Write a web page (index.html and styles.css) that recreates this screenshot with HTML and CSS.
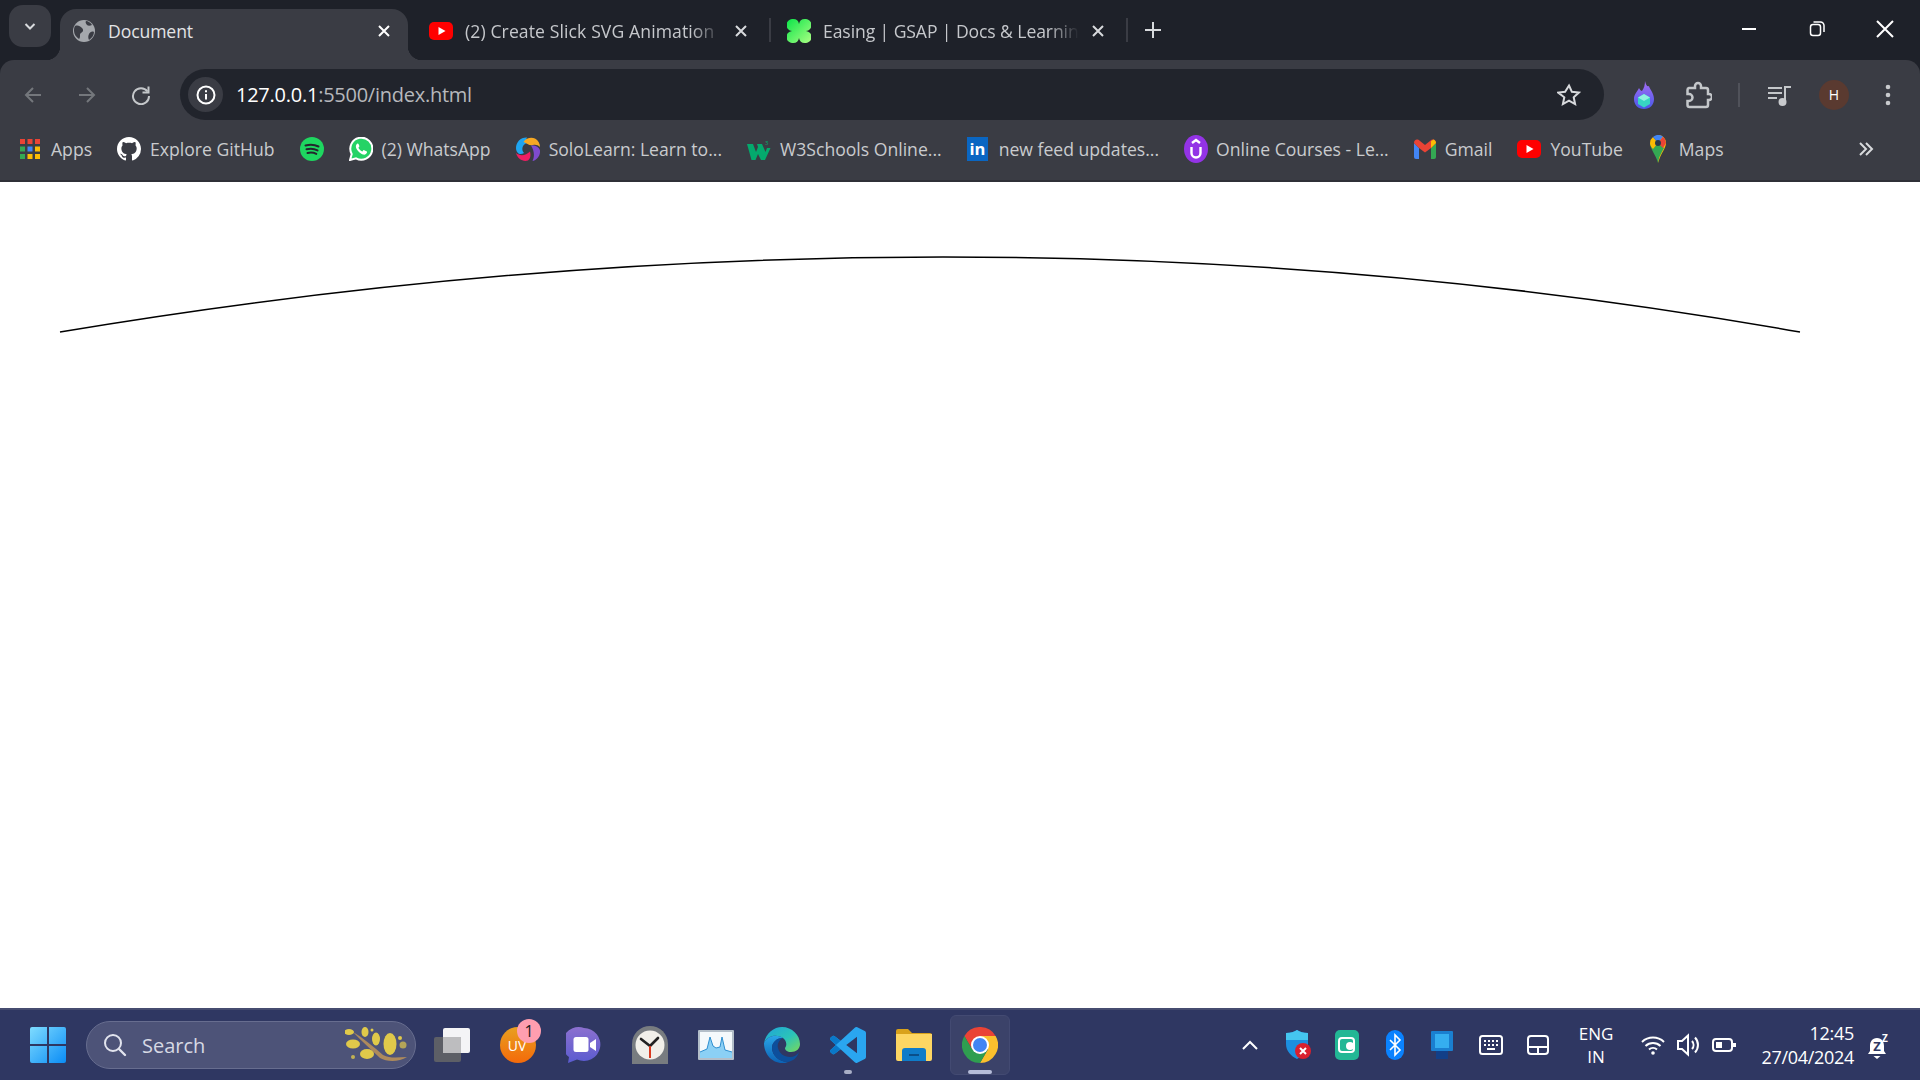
FILE: index.html
```html
<!DOCTYPE html>
<html lang="en">
<head>
<meta charset="utf-8">
<title>Document</title>
<link rel="stylesheet" href="styles.css">
</head>
<body>
<header class="chrome">
  <div class="tabstrip">
    <button class="tab-menu"><svg width="14" height="14" viewBox="0 0 14 14"><path d="M2.5 5l4.5 4.5L11.5 5" class="st2 lt"/></svg></button>
    <div class="tab tab-active">
      <svg class="fav" width="24" height="24" viewBox="0 0 24 24"><circle cx="12" cy="12" r="11" fill="#a5a8ad"/><path d="M3 7c3-1 5 0 7 2s1 4-1 5 0 4-2 6c-3-2-5-5-5-8 0-2 0-3 1-5zM14 2c2 0 5 2 6 4-2 1-4 1-5 0s-2-3-1-4zM22 13c0 3-2 6-5 8-1-2-1-4 0-6s3-3 5-2z" fill="#3a3c44"/></svg>
      <span class="tab-title tab-title-active">Document</span>
      <svg class="x" width="14" height="14" viewBox="0 0 14 14"><path d="M2 2l10 10M12 2L2 12" class="st2 wh"/></svg>
    </div>
    <div class="tab tab-yt">
      <svg class="fav" width="24" height="24" viewBox="0 0 24 24"><rect y="3" width="24" height="18" rx="5" fill="#f00"/><path d="M9.5 8l7 4-7 4z" fill="#fff"/></svg>
      <span class="tab-title tab-title-yt">(2) Create Slick SVG Animation</span>
      <svg class="x" width="14" height="14" viewBox="0 0 14 14"><path d="M2 2l10 10M12 2L2 12" class="st2 lt"/></svg>
    </div>
    <i class="tab-sep"></i>
    <div class="tab tab-gs">
      <svg class="fav" width="24" height="24" viewBox="0 0 24 24"><defs><linearGradient id="gs" x1="0" y1="0" x2="1" y2="1"><stop offset="0" stop-color="#0ae448"/><stop offset="1" stop-color="#abff84"/></linearGradient></defs><path d="M6 0a6 6 0 0 1 6 5 6 6 0 0 1 6-5 6 6 0 0 1 1 12 6 6 0 0 1-1 12 6 6 0 0 1-6-5 6 6 0 0 1-6 5 6 6 0 0 1-1-12A6 6 0 0 1 6 0z" fill="url(#gs)"/></svg>
      <span class="tab-title tab-title-gs">Easing | GSAP | Docs &amp; Learnin</span>
      <svg class="x" width="14" height="14" viewBox="0 0 14 14"><path d="M2 2l10 10M12 2L2 12" class="st2 lt"/></svg>
    </div>
    <i class="tab-sep"></i>
    <svg class="plus" width="16" height="16" viewBox="0 0 16 16"><path d="M8 0v16M0 8h16" class="st2 lt"/></svg>
    <div class="win-ctrl">
      <svg width="16" height="16" viewBox="0 0 16 16"><path d="M1 8h14" class="st2 wh"/></svg>
      <svg width="16" height="16" viewBox="0 0 16 16"><rect x="1.5" y="3.5" width="10" height="11" rx="2.5" class="st1 wh"/><path d="M4.5 1h7a3.5 3.5 0 0 1 3.5 3.5V11" class="st1 wh"/></svg>
      <svg width="18" height="18" viewBox="0 0 18 18"><path d="M1 1l16 16M17 1L1 17" class="st2 wh"/></svg>
    </div>
  </div>
  <div class="toolbar">
    <div class="nav">
      <svg width="20" height="20" viewBox="0 0 20 20"><path d="M18 10H3M10 3l-7 7 7 7" class="st2 dim"/></svg>
      <svg width="20" height="20" viewBox="0 0 20 20"><path d="M2 10h15M10 3l7 7-7 7" class="st2 dim"/></svg>
      <svg width="20" height="20" viewBox="0 0 20 20"><path d="M16.5 6.5A8 8 0 1 0 18 11" class="st2 lt2"/><path d="M17.5 1.5v6h-6" class="st2 lt2"/></svg>
    </div>
    <div class="omnibox">
      <div class="info"><svg width="20" height="20" viewBox="0 0 20 20"><circle cx="10" cy="10" r="8.5" class="st2 wh"/><path d="M10 9v5.5M10 5.2v2" class="st2 wh"/></svg></div>
      <span class="url"><b class="url-host">127.0.0.1</b>:5500/index.html</span>
      <svg class="star" width="24" height="24" viewBox="0 0 24 24"><path d="M12 2.5l2.9 6.3 6.9.8-5.1 4.7 1.4 6.8-6.1-3.4-6.1 3.4 1.4-6.8L1.2 9.6l6.9-.8z" class="st2 lt"/></svg>
    </div>
    <div class="tools">
      <svg class="t-flame" width="20" height="28" viewBox="0 0 20 28"><defs><linearGradient id="fl" x1="0" y1="0" x2="0" y2="1"><stop offset="0" stop-color="#a56cf5"/><stop offset="1" stop-color="#4a5ae8"/></linearGradient></defs><path d="M11 0c1 4 2 6 4 5 0 2 5 7 5 13 0 6-4 10-10 10S0 24 0 18c0-5 3-7 5-11 1 2 2 3 3 3 2-3 3-6 3-10z" fill="url(#fl)"/><path d="M10 13l6 3.500v6.500l-6 3.500-6-3.500v-6.500z" fill="#37d6c4"/><path d="M10 13l6 3.500-6 3.500-6-3.500z" fill="#8ff0e0"/></svg>
      <svg class="t-puzzle" width="26" height="28" viewBox="0 0 26 28"><path d="M3 7h6V5a3 3 0 0 1 6 0v2h5a2 2 0 0 1 2 2v4h1a3 3 0 0 1 0 6h-1v5a2 2 0 0 1-2 2H3.500a2 2 0 0 1-2-2v-4h1.500a3 3 0 0 0 0-7H1.500V9a2 2 0 0 1 1.500-2z" class="st3 lt2"/></svg>
      <i class="t-sep"></i>
      <svg class="t-media" width="24" height="24" viewBox="0 0 24 24"><path d="M0 5h14M0 10h14M0 15h9" class="st2 lt2"/><path d="M17 19V4h6" class="st2 lt2"/><circle cx="14.500" cy="19" r="4" fill="#c8cacd"/></svg>
      <span class="avatar">H</span>
      <svg class="t-dots" width="6" height="22" viewBox="0 0 6 22"><circle cx="3" cy="3" r="2.300" fill="#c8cacd"/><circle cx="3" cy="11" r="2.300" fill="#c8cacd"/><circle cx="3" cy="19" r="2.300" fill="#c8cacd"/></svg>
    </div>
  </div>
  <nav class="bookmarks">
    <a class="bm bm-apps"><svg width="20" height="20" viewBox="0 0 20 20"><path d="M0 0h5v5H0z" fill="#ea4335"/><path d="M7.500 0h5v5h-5z" fill="#ea4335"/><path d="M15 0h5v5h-5z" fill="#ea4335"/><path d="M0 7.500h5v5H0z" fill="#34a853"/><path d="M7.500 7.500h5v5h-5z" fill="#4285f4"/><path d="M15 7.500h5v5h-5z" fill="#fbbc04"/><path d="M0 15h5v5H0z" fill="#34a853"/><path d="M7.500 15h5v5h-5z" fill="#fbbc04"/><path d="M15 15h5v5h-5z" fill="#fbbc04"/></svg><span>Apps</span></a>
    <a class="bm"><svg width="24" height="24" viewBox="0 0 16 16"><path fill="#fff" d="M8 0C3.580 0 0 3.580 0 8c0 3.540 2.290 6.530 5.470 7.590.4.070.55-.17.55-.38 0-.19-.01-.82-.01-1.490-2.010.37-2.530-.49-2.690-.94-.09-.23-.48-.94-.82-1.130-.28-.15-.68-.52-.01-.53.630-.01 1.080.58 1.230.82.720 1.210 1.870.87 2.330.66.070-.52.28-.87.51-1.070-1.780-.2-3.640-.89-3.640-3.950 0-.87.310-1.590.82-2.150-.08-.2-.36-1.020.08-2.120 0 0 .67-.21 2.200.82.640-.18 1.320-.27 2-.27s1.360.09 2 .27c1.530-1.040 2.200-.82 2.200-.82.440 1.100.160 1.920.080 2.120.510.560.820 1.270.820 2.150 0 3.070-1.870 3.750-3.650 3.950.290.250.540.730.540 1.480 0 1.070-.01 1.930-.01 2.200 0 .210.150.460.550.380A8.010 8.010 0 0 0 16 8c0-4.420-3.580-8-8-8z"/></svg><span>Explore GitHub</span></a>
    <a class="bm"><svg width="24" height="24" viewBox="0 0 24 24"><circle cx="12" cy="12" r="12" fill="#1ed760"/><path d="M5.500 8.500c4.500-1.300 9-1 13 1M6.500 12.300c3.700-1 7.500-.8 11 1.100M7.500 16c3-.8 6-.6 8.800.9" fill="none" stroke="#23262d" stroke-width="2" stroke-linecap="round"/></svg></a>
    <a class="bm"><svg width="24" height="24" viewBox="0 0 24 24"><path d="M1 23l1.700-6A11 11 0 1 1 7 21.300z" fill="#25d366" stroke="#fff" stroke-width="2"/><path d="M8.500 6.500c-1 .5-2 2-1.500 4 .7 2.500 3.800 6 7 7 2 .5 3.500-.5 4-2 .2-.5 0-1-.5-1.200l-2.300-1.100c-.4-.2-.8 0-1 .3l-.8 1c-1.500-.5-3.300-2.200-4-3.800l.8-.9c.2-.3.300-.6.100-1L9.500 7c-.2-.5-.6-.7-1-.5z" fill="#fff"/></svg><span>(2) WhatsApp</span></a>
    <a class="bm"><svg width="24" height="24" viewBox="0 0 24 24"><path d="M11 0.500C5 0 0 5 0 11c0 2.500 1 4.500 2.500 5.500 2 1 4 .5 5.500-.5C5 13 6 7.500 11 6c-1-2-1-4 0-5.500z" fill="#1ea5f1"/><path d="M7.500 5C10 1 15 0 19 1.500c3 1.500 5 5 5 8.500-2-2-4.500-2.800-7-2-3.500 1-6-1.500-9.500-3z" fill="#f7a823"/><path d="M15 8.500c4-.5 8 1 9 5 .5 5-3 9.500-7.500 10.500 2.500-5 1.500-11-1.500-15.500z" fill="#7f4bd0"/><path d="M0 16c4 3.500 10 2.500 14-1.500 1 3.500.5 7-2 9C7 25 1.500 22 0 16z" fill="#ee1e62"/></svg><span>SoloLearn: Learn to...</span></a>
    <a class="bm"><svg class="ico-w3" width="24" height="24" viewBox="0 0 24 24"><path d="M0 7h6l3 8 2-5-1-3h5l3.500 8 1.500-4h3.500l-5.500 12h-4L11 17l-2.500 6h-4z" fill="#04a96d"/><text x="18" y="8" class="sup3">3</text></svg><span>W3Schools Online...</span></a>
    <a class="bm bm-in"><svg width="21" height="24" viewBox="0 0 21 24"><rect width="21" height="24" y="0" fill="#0a66c2"/><text x="10.500" y="18" class="intxt">in</text></svg><span>new feed updates...</span></a>
    <a class="bm bm-u"><svg width="24" height="28" viewBox="0 0 24 28"><ellipse cx="12" cy="14" rx="12" ry="14" fill="#9333e6"/><path d="M7.500 12v6a4.500 4.500 0 0 0 9 0v-6M8 8l4-3 4 3" fill="none" stroke="#fff" stroke-width="2.400"/></svg><span>Online Courses - Le...</span></a>
    <a class="bm bm-g"><svg width="22" height="20" viewBox="0 0 22 20"><path d="M0 4v14a2 2 0 0 0 2 2h3V9z" fill="#4285f4"/><path d="M17 9v11h3a2 2 0 0 0 2-2V4z" fill="#34a853"/><path d="M0 4c0-3 3-5 6-2l5 4 5-4c3-3 6-1 6 2l-5 5-6 4.500L5 9z" fill="#ea4335"/><path d="M17 9l5-5c0-1.500-1-3-2.500-3.500L17 2.200z" fill="#fbbc04"/></svg><span>Gmail</span></a>
    <a class="bm"><svg width="24" height="24" viewBox="0 0 24 24"><rect y="3" width="24" height="18" rx="5" fill="#f00"/><path d="M9.500 8l7 4-7 4z" fill="#fff"/></svg><span>YouTube</span></a>
    <a class="bm bm-m"><svg width="16" height="28" viewBox="0 0 16 28"><path d="M8 0a8 8 0 0 1 8 8c0 5-5 10-8 20z" fill="#fbbc04"/><path d="M8 28C6 20 0 14 0 8l8 0 6 5c-2 4-5 8-6 15z" fill="#34a853"/><path d="M0 8a8 8 0 0 1 3-6l5 6-5 6c-2-2-3-4-3-6z" fill="#fbbc04"/><path d="M3 2a8 8 0 0 1 10-.200L8 8z" fill="#4285f4"/><path d="M13 1.800A8 8 0 0 1 16 8l-3 5-5-5z" fill="#ea4335"/><circle cx="8" cy="8" r="3" fill="#2a3a4a"/></svg><span>Maps</span></a>
    <svg class="more" width="16" height="14" viewBox="0 0 16 14"><path d="M2 1l6 6-6 6M8 1l6 6-6 6" class="st2 lt"/></svg>
  </nav>
</header>

<main class="page">
  <svg class="curve" viewBox="0 182 1920 826" preserveAspectRatio="none"><path d="M60 332Q956 182 1800 332" fill="none" stroke="#000" stroke-width="1.500"/></svg>
</main>

<footer class="taskbar">
  <svg class="start" width="36" height="36" viewBox="0 0 36 36"><defs><linearGradient id="win" x1="0" y1="0" x2="1" y2="1"><stop offset="0" stop-color="#7fdcff"/><stop offset="1" stop-color="#0a8cf5"/></linearGradient></defs><path d="M2 0h15v17H0V2a2 2 0 0 1 2-2zM19 0h15a2 2 0 0 1 2 2v15H19zM0 19h17v17H2a2 2 0 0 1-2-2zM19 19h17v15a2 2 0 0 1-2 2H19z" fill="url(#win)"/></svg>
  <div class="search">
    <svg width="24" height="24" viewBox="0 0 24 24"><circle cx="10" cy="10" r="8" fill="none" stroke="#e2e4ee" stroke-width="2"/><path d="M16 16l6 6" stroke="#e2e4ee" stroke-width="2.400" stroke-linecap="round"/></svg>
    <span class="search-text">Search</span>
    <svg class="blossom" width="64" height="36" viewBox="0 0 64 36"><path d="M8 5c10 6 20 14 30 23 8 4 16 2 24 2-8 5-20 5-27 1C26 22 16 14 8 5z" fill="#ad8a5c"/><g fill="#e0c94a"><ellipse cx="4" cy="5" rx="5" ry="3"/><ellipse cx="20" cy="5" rx="3.500" ry="5"/><ellipse cx="8" cy="17" rx="7" ry="4.500"/><ellipse cx="31" cy="12" rx="4" ry="6.500"/><ellipse cx="22" cy="27" rx="7" ry="5"/><ellipse cx="45" cy="17" rx="6.500" ry="11"/><circle cx="58" cy="18" r="3.500" opacity=".7"/><circle cx="55" cy="11" r="2"/><circle cx="8" cy="30" r="2" opacity=".8"/><circle cx="27" cy="3" r="1.500"/></g></svg>
  </div>
  <svg class="taskview" width="36" height="34" viewBox="0 0 36 34"><rect y="9" width="27" height="25" rx="2" fill="#5d5f66"/><rect x="9" width="27" height="25" rx="2" fill="#f4f4f6"/><rect x="9" y="9" width="18" height="16" fill="#bdbdbf"/></svg>
  <div class="apps">
    <div class="app app-uv"><svg width="36" height="36" viewBox="0 0 36 36"><defs><linearGradient id="uv" x1="0" y1="0" x2="0" y2="1"><stop offset="0" stop-color="#e8a020"/><stop offset="1" stop-color="#f46a0a"/></linearGradient></defs><circle cx="18" cy="18" r="18" fill="url(#uv)"/><text x="17" y="24" class="uvtxt">UV</text></svg><span class="badge">1</span></div>
    <div class="app"><svg width="36" height="36" viewBox="0 0 36 36"><defs><linearGradient id="mt" x1="0" y1="0" x2="0" y2="1"><stop offset="0" stop-color="#8c70cf"/><stop offset="1" stop-color="#5a5bd0"/></linearGradient></defs><path d="M18 1a16.500 16.500 0 1 1-7 31.500L2 36l1-6A16.500 16.500 0 0 1 18 1z" fill="url(#mt)"/><rect x="7.500" y="10" width="15" height="15" rx="2.500" fill="#fff"/><path d="M24 16l6-4v12l-6-4z" fill="#fff"/></svg></div>
    <div class="app"><svg width="36" height="38" viewBox="0 0 36 38"><path d="M28 3l4 3-2 2-4-3z" fill="#555"/><path d="M0 18a18 18 0 0 1 36 0v20H0z" fill="#787c80"/><circle cx="18" cy="19" r="14.500" fill="#f1efe9"/><path d="M18 20L9 13M18 20l8-8" stroke="#222" stroke-width="2.600" stroke-linecap="round"/><path d="M18 20v12" stroke="#d9391f" stroke-width="2"/></svg></div>
    <div class="app"><svg width="36" height="30" viewBox="0 0 36 30"><rect width="36" height="30" rx="1" fill="#b3bec9"/><rect x="2" y="2" width="32" height="26" fill="#f4f9fc"/><path d="M2 22l7-3 3-12 3 9 3 2 4-1 2-10 3 13 7 2v6H2z" fill="#8bd0f5"/><path d="M2 22l7-3 3-12 3 9 3 2 4-1 2-10 3 13 7 2" fill="none" stroke="#2e8fd0"/></svg></div>
    <div class="app"><svg width="36" height="36" viewBox="0 0 36 36"><defs><linearGradient id="ed" x1="0" y1="0" x2="1" y2="1"><stop offset="0" stop-color="#1fa3d9"/><stop offset=".55" stop-color="#2bc4b8"/><stop offset="1" stop-color="#7ad85a"/></linearGradient><linearGradient id="ed2" x1="0" y1="0" x2="0" y2="1"><stop offset="0" stop-color="#2aa5e8"/><stop offset="1" stop-color="#0c62b4"/></linearGradient></defs><path d="M0 16C2 6 10 0 18 0c10 0 18 8 18 17 0 5-4 8-9 8-4 0-6-2-6-4 2-2 2-7-2-10C13 7 4 8 0 16z" fill="url(#ed)"/><path d="M0 16c4-8 13-9 19-5-7 0-11 5-11 10 0 7 7 14 16 14-2 1-4 1-6 1C8 36 0 27 0 16z" fill="url(#ed2)"/><path d="M19 11c-4 2-6 6-5 10 1 5 6 9 12 9 4 0 7-2 9-5-2 6-6 9-11 10-9 0-16-7-16-14 0-5 4-10 11-10z" fill="#0d4f9c"/></svg></div>
    <div class="app app-on"><svg width="36" height="36" viewBox="0 0 100 100"><path fill="#2aa6f0" fill-rule="evenodd" d="M70.900 99.300a6.200 6.200 0 0 0 5-.2l20.600-9.900a6.200 6.200 0 0 0 3.500-5.600V16.400a6.200 6.200 0 0 0-3.500-5.600L75.900.9a6.200 6.200 0 0 0-7.100 1.200L29.400 38 12.200 25a4.200 4.200 0 0 0-5.300.2l-5.500 5a4.200 4.200 0 0 0 0 6.200L16.300 50 1.400 63.600a4.200 4.200 0 0 0 0 6.200l5.500 5a4.200 4.200 0 0 0 5.300.2l17.200-13 39.400 36a6.200 6.200 0 0 0 2.100 1.300zM75 27.300L45.100 50 75 72.700V27.300z"/><path fill="#0a78c8" d="M12.200 25a4.200 4.200 0 0 0-5.300.2l-5.500 5a4.200 4.200 0 0 0 0 6.200l14.900 13.600 13.100-12zM1.400 63.600a4.200 4.200 0 0 0 0 6.200l5.500 5a4.200 4.200 0 0 0 5.300.2l17.200-13-13.100-12z"/></svg></div>
    <div class="app"><svg width="36" height="32" viewBox="0 0 36 32"><path d="M0 2a2 2 0 0 1 2-2h10l4 4h18a2 2 0 0 1 2 2v6H0z" fill="#d9a21b"/><path d="M0 5h36v25a2 2 0 0 1-2 2H2a2 2 0 0 1-2-2z" fill="#fdd663"/><path d="M6 32V22a3 3 0 0 1 3-3h18a3 3 0 0 1 3 3v10z" fill="#0f7cc9"/><path d="M13 25h10v2H13z" fill="#0a4f8a"/></svg></div>
    <div class="app app-active"><svg width="36" height="36" viewBox="0 0 36 36"><path d="M2.400 9A18 18 0 0 1 33.600 9H18l-7.800 13.500z" fill="#ea4335"/><path d="M33.600 9A18 18 0 0 1 18 36l7.800-13.500L18 9z" fill="#fbc02d"/><path d="M18 36A18 18 0 0 1 2.400 9l7.800 13.500h15.600z" fill="#2f9e50"/><circle cx="18" cy="18" r="9" fill="#fff"/><circle cx="18" cy="18" r="7" fill="#4285f4"/></svg></div>
  </div>
  <div class="tray">
    <svg class="tr-chev" width="16" height="10" viewBox="0 0 16 10"><path d="M1 9l7-7 7 7" class="st2 wh"/></svg>
    <svg class="tr-def" width="26" height="30" viewBox="0 0 26 30"><path d="M11 0c3 2 6 3 11 3v11c0 7-5 12-11 15C5 26 0 21 0 14V3c5 0 8-1 11-3z" fill="#1c8fe0"/><path d="M11 0c-3 2-6 3-11 3v7h22V3c-5 0-8-1-11-3z" fill="#45c6f0"/><circle cx="17" cy="21" r="8" fill="#d9202e"/><path d="M14 18l6 6M20 18l-6 6" class="st2 wh"/></svg>
    <svg class="tr-g" width="24" height="30" viewBox="0 0 24 30"><rect width="24" height="30" rx="5" fill="#22b795"/><rect x="4" y="8" width="15" height="14" rx="3" fill="none" stroke="#fff" stroke-width="2"/><circle cx="15" cy="16" r="4" fill="#fff"/></svg>
    <svg class="tr-bt" width="18" height="30" viewBox="0 0 18 30"><rect width="18" height="30" rx="9" fill="#0a82ff"/><path d="M4 10l10 10-5 5V5l5 5L4 20" fill="none" stroke="#fff" stroke-width="1.600"/></svg>
    <svg class="tr-b" width="22" height="28" viewBox="0 0 22 28"><rect width="22" height="20" rx="1" fill="#1a7fd0"/><rect x="4" y="3" width="14" height="14" fill="#35aef0"/><rect x="5" y="20" width="12" height="8" fill="#123f88"/></svg>
    <svg class="tr-kb" width="24" height="20" viewBox="0 0 24 20"><rect x="1" y="1" width="22" height="18" rx="2.500" class="st2 wh"/><path d="M5 6h2M9 6h2M13 6h2M17 6h2M5 10h2M9 10h2M13 10h2M17 10h2M8 14h8" class="st2 wh"/></svg>
    <svg class="tr-tp" width="22" height="20" viewBox="0 0 22 20"><rect x="1" y="1" width="20" height="18" rx="3" class="st2 wh"/><path d="M1 12h20M11 12v7" class="st2 wh"/></svg>
    <div class="lang"><span>ENG</span><span>IN</span></div>
    <svg class="tr-wifi" width="24" height="20" viewBox="0 0 24 20"><path d="M1 7a16 16 0 0 1 22 0M4.500 11a11 11 0 0 1 15 0M8 14.500a6 6 0 0 1 8 0" class="st2 wh"/><circle cx="12" cy="18" r="1.800" fill="#fff"/></svg>
    <svg class="tr-vol" width="24" height="24" viewBox="0 0 24 24"><path d="M1 8h4l6-5.500v19L5 16H1z" class="st2 wh"/><path d="M15 8a6 6 0 0 1 0 8M18 4.500a11 11 0 0 1 0 15" class="st2 wh"/></svg>
    <svg class="tr-bat" width="24" height="14" viewBox="0 0 24 14"><rect x="1" y="1" width="19" height="12" rx="3" class="st2 wh"/><rect x="4" y="4" width="6" height="6" fill="#fff"/><rect x="21" y="5" width="3" height="4" fill="#fff"/></svg>
    <div class="clock"><span>12:45</span><span>27/04/2024</span></div>
    <svg class="tr-bell" width="24" height="32" viewBox="0 -4 24 32"><path d="M9 5c5 0 7 4 7 8v5l2 3H0l2-3v-5c0-4 2-8 7-8zM5.500 23h7l-3.500 3z" fill="#fff"/><text x="9" y="18" class="zz">Z</text><text x="14" y="9" class="zzw">Z</text></svg>
  </div>
</footer>
</body>
</html>
```
FILE: styles.css
```css
* { box-sizing: border-box; }
html, body { margin: 0; height: 100%; }
body {
  display: flex;
  flex-direction: column;
  height: 100vh;
  overflow: hidden;
  background: #fff;
  font-family: "Open Sans", "Noto Sans", sans-serif;
}
svg { display: block; flex: none; }

.st1 { fill: none; stroke-width: 1.500; }
.st2 { fill: none; stroke-width: 2; }
.st3 { fill: none; stroke-width: 2.500; }
.wh { stroke: #fff; }
.lt { stroke: #d8dadd; }
.lt2 { stroke: #c4c7ca; }
.dim { stroke: #74777c; }

/* browser chrome */
.chrome { flex: none; background: #1e2129; }
.tabstrip {
  display: flex;
  align-items: center;
  height: 60px;
  padding-left: 9px;
}
.tab-menu {
  width: 42px;
  height: 42px;
  margin: -9px 9px 0 0;
  border: 0;
  border-radius: 14px;
  padding: 0;
  background: #3a3c44;
  display: flex;
  align-items: center;
  justify-content: center;
}
.tab {
  position: relative;
  display: flex;
  align-items: center;
  height: 51px;
  align-self: flex-end;
  padding-bottom: 8px;
}
.tab-active {
  width: 348px;
  padding-left: 12px;
  padding-right: 17px;
  background: #3a3c44;
  border-radius: 16px 16px 0 0;
}
.tab-active::before,
.tab-active::after {
  content: "";
  position: absolute;
  bottom: 0;
  width: 14px;
  height: 14px;
}
.tab-active::before { left: -14px; background: radial-gradient(circle at 0 0, transparent 14px, #3a3c44 14.500px); }
.tab-active::after { right: -14px; background: radial-gradient(circle at 100% 0, transparent 14px, #3a3c44 14.500px); }
.tab-yt { width: 361px; padding-left: 21px; padding-right: 21px; }
.tab-gs { width: 355px; padding-left: 16px; padding-right: 21px; }
.tab .fav { margin-right: 12px; }
.tab-title {
  flex: 1;
  font-size: 17.600px;
  white-space: nowrap;
  color: #e3e4e6;
  letter-spacing: -0.1px;
}
.tab-title-yt, .tab-title-gs {
  color: #c6c8cc;
  -webkit-mask-image: linear-gradient(to right, #000 88%, transparent 100%);
  mask-image: linear-gradient(to right, #000 88%, transparent 100%);
}
.tab-title-yt { letter-spacing: 0.1px; }
.x { margin-left: 12px; }
.tab-sep {
  flex: none;
  width: 2px;
  height: 24px;
  background: #3a3c44;
}
.plus { margin-left: 17px; }
.win-ctrl {
  margin-left: auto;
  padding-right: 26px;
  display: flex;
  align-items: center;
  gap: 51.500px;
  margin-top: -2px;
}

.toolbar {
  display: flex;
  align-items: flex-end;
  height: 60px;
  background: #3a3c44;
  border-radius: 14px 14px 0 0;
}
.nav {
  display: flex;
  align-items: center;
  gap: 34px;
  width: 180px;
  height: 51px;
  padding-left: 23px;
}
.omnibox {
  display: flex;
  align-items: center;
  width: 1424px;
  height: 51px;
  padding: 0 23px 0 8px;
  background: #21242c;
  border-radius: 26px;
}
.info {
  width: 35px;
  height: 35px;
  border-radius: 50%;
  background: #3a3c44;
  display: flex;
  align-items: center;
  justify-content: center;
  margin-right: 13px;
}
.url { flex: 1; font-size: 20px; color: #b6b8bc; letter-spacing: -0.25px; white-space: nowrap; }
.url-host { font-weight: 400; color: #fff; }
.tools {
  flex: 1;
  display: flex;
  align-items: center;
  height: 51px;
  padding-left: 30px;
}
.t-puzzle { margin-left: 32px; }
.t-sep { flex: none; width: 2px; height: 24px; margin-left: 26px; background: #50525a; }
.t-media { margin-left: 28px; }
.avatar {
  flex: none;
  width: 30px;
  height: 30px;
  margin-left: 27px;
  border-radius: 50%;
  background: #5a3a30;
  color: #fff;
  font-size: 14px;
  line-height: 30px;
  text-align: center;
}
.t-dots { margin-left: 36px; }

.bookmarks {
  display: flex;
  align-items: center;
  gap: 25px;
  height: 62px;
  padding: 0 0 2px 20px;
  background: #3a3c44;
  border-bottom: 2px solid #2f3037;
}
.bm {
  display: flex;
  align-items: center;
  gap: 9px;
  font-size: 17.600px;
  color: #c9cbce;
  white-space: nowrap;
}
.bm-apps { gap: 11px; }
.bm-in { gap: 11px; }
.bm-u { gap: 8px; }
.bm-m { gap: 13px; margin-left: 2px; }
.more { margin-left: auto; margin-right: 46px; }
.sup3 { font: 6px "Open Sans", sans-serif; fill: #04a96d; }
.intxt { font: 700 16.500px "Open Sans", sans-serif; fill: #fff; text-anchor: middle; }

/* page */
.page { flex: 1; min-height: 0; background: #fff; }
.curve { width: 100%; height: 100%; }

/* taskbar */
.taskbar {
  flex: none;
  display: flex;
  align-items: center;
  height: 72px;
  padding-left: 30px;
  background: #2f3762;
  border-top: 2px solid #464c70;
}
.start { margin-right: 20px; }
.search {
  display: flex;
  align-items: center;
  width: 330px;
  height: 48px;
  padding: 0 6px 0 16px;
  border: 1px solid #676d8f;
  border-radius: 24px;
  background: #4d5378;
}
.search-text { flex: 1; margin-left: 15px; font-size: 20px; color: #d7d9e4; }
.taskview { margin-left: 18px; margin-right: 30px; }
.apps { display: flex; align-items: center; gap: 30px; }
.app {
  position: relative;
  display: flex;
  align-items: center;
  justify-content: center;
  width: 36px;
  height: 60px;
}
.app-on::after, .app-active::after {
  content: "";
  position: absolute;
  bottom: 1px;
  height: 4px;
  border-radius: 2px;
}
.app-on::after { width: 8px; background: #a8aec6; }
.app-active::before {
  content: "";
  position: absolute;
  inset: 0 -12px;
  border-radius: 6px;
  background: #3b4269;
  border: 1px solid #434a72;
}
.app-active svg { position: relative; }
.app-active::after { width: 24px; background: #b5bcd9; }
.badge {
  position: absolute;
  top: 4px;
  left: 17px;
  width: 24px;
  height: 24px;
  border-radius: 50%;
  background: #ff9eaf;
  color: #1b1b1b;
  font-size: 16px;
  line-height: 24px;
  text-align: center;
}
.uvtxt { font: 400 14px "Open Sans", sans-serif; fill: #fff; text-anchor: middle; }

.tray {
  margin-left: auto;
  display: flex;
  align-items: center;
  color: #fff;
  padding-right: 28px;
}
.tr-def { margin-left: 28px; }
.tr-g { margin-left: 23px; }
.tr-bt { margin-left: 27px; }
.tr-b { margin-left: 27px; }
.tr-kb { margin-left: 26px; }
.tr-tp { margin-left: 24px; }
.lang {
  display: flex;
  flex-direction: column;
  align-items: center;
  width: 40px;
  margin-left: 27px;
  font-size: 17px;
  line-height: 23px;
}
.tr-wifi { margin-left: 25px; }
.tr-vol { margin-left: 12px; }
.tr-bat { margin-left: 11px; }
.clock {
  display: flex;
  flex-direction: column;
  align-items: flex-end;
  margin-left: 24px;
  width: 94px;
  font-size: 18px;
  line-height: 24px;
  white-space: nowrap;
  letter-spacing: -0.3px;
}
.tr-bell { margin-left: 14px; }
.zz { font: 700 13px "Open Sans", sans-serif; fill: #2f3762; text-anchor: middle; }
.zzw { font: 700 10px "Open Sans", sans-serif; fill: #fff; }
```
